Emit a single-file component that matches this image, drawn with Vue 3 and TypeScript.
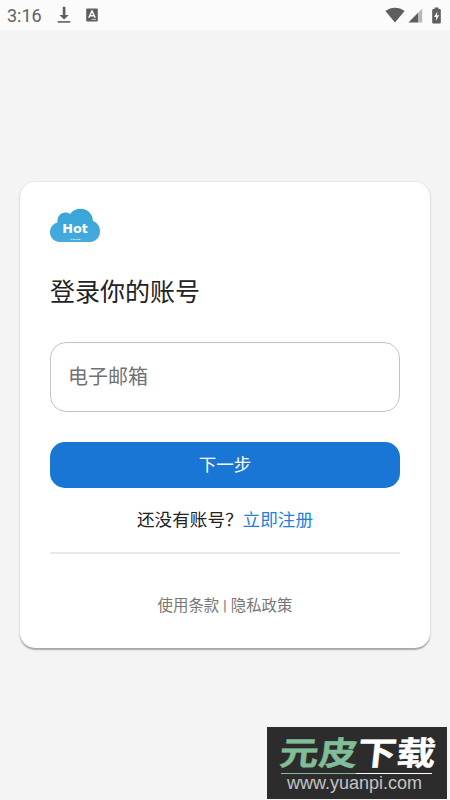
<script setup lang="ts">
import { ref } from 'vue'

const email = ref('')
const time = '3:16'
const legalLinks: string[] = ['使用条款', '隐私政策']
</script>

<template>
  <div class="screen">
    <header class="status">
      <span class="time">{{ time }}</span>
      <svg class="download" width="14" height="18" viewBox="0 0 14 18">
        <path d="M5.8.8h2.6v8.1h3.4L7.1 13.4 2.4 8.9h3.4z" />
        <path d="M.7 15.1h12.6v1.6H.7z" />
      </svg>
      <svg class="app" width="12" height="14" viewBox="0 0 12 14">
        <rect x=".2" y=".4" width="11.6" height="13" rx="1.2" />
        <path class="cut" d="M2.8 9.7 6 3l3.2 6.7M4.2 7.7h3.7" />
        <path class="cut thin" d="M5.5 11.4H10" />
      </svg>
      <span class="spacer"></span>
      <svg class="wifi" width="20" height="16" viewBox="0 0 20 16">
        <path d="M.4 4.1C5.9-.4 14.1-.4 19.6 4.1L10 15.6z" />
      </svg>
      <svg class="signal" width="15" height="15" viewBox="0 0 15 15">
        <path class="faint" d="M14.2.5v14H10V4.7z" />
        <path d="M10 4.7v9.8H.4z" />
      </svg>
      <svg class="battery" width="9" height="17" viewBox="0 0 9 17">
        <path d="M2.5.4h4v1.7h1.3q1 0 1 1v12.5q0 1-1 1H1.2q-1 0-1-1V3.1q0-1 1-1h1.3z" />
        <path class="bolt" d="M5.4 4.5 2 10h2.3L3.8 14l3.4-5.7H4.9z" />
      </svg>
    </header>

    <main class="stage">
      <form class="card" @submit.prevent>
        <svg class="logo" width="50" height="35" viewBox="0 0 50 35">
          <defs>
            <linearGradient id="cloud" x1="0" y1="0" x2="0" y2="1">
              <stop offset="0" stop-color="#38a5d8" />
              <stop offset="1" stop-color="#46aadd" />
            </linearGradient>
          </defs>
          <path
            fill="url(#cloud)"
            d="M9.5 34C4 33.5 0 29.4 0 24.4c0-5.2 3.2-9 7.4-10C7 8.8 10.6 4.6 15.4 4.6c1.8 0 3.4.5 4.7 1.5C22.2 2.7 26.2.7 30.6.7c7.1 0 12.3 5.4 12.4 12.4C47.3 14.7 50 18.6 50 23.2c0 6.2-4 10.3-9.8 10.8z"
          />
          <text x="25.1" y="25" text-anchor="middle" class="logo-name">Hot</text>
          <path class="logo-line" d="M20.5 31.4h10.5" />
        </svg>
        <h1>登录你的账号</h1>
        <input v-model="email" type="email" placeholder="电子邮箱" />
        <button type="submit">下一步</button>
        <p class="signup">还没有账号？<a>立即注册</a></p>
        <hr />
        <p class="legal"><a>{{ legalLinks[0] }}</a> | <a>{{ legalLinks[1] }}</a></p>
      </form>
    </main>

    <aside class="mark">
      <div class="mark-name"><span>元皮</span>下载</div>
      <div class="mark-rule"></div>
      <div class="mark-url">www.yuanpi.com</div>
    </aside>
  </div>
</template>

<style>
body {
  background: #f4f4f4;
}
</style>

<style scoped>
.screen {
  position: relative;
  box-sizing: border-box;
  width: 450px;
  height: 800px;
  overflow: hidden;
  background: #f4f4f4;
  font-family: Roboto, 'Noto Sans CJK SC', sans-serif;
}
.status {
  display: flex;
  align-items: center;
  box-sizing: border-box;
  height: 30px;
  padding: 0 9px 0 7px;
  background: #fbfbfb;
  color: #626262;
}
.status svg {
  fill: #5e5e5e;
}
.time {
  width: 50px;
  font-size: 18px;
  line-height: 30px;
  padding-top: 2px;
}
.app {
  margin-left: 15px;
}
.app .cut {
  fill: none;
  stroke: #fbfbfb;
  stroke-width: 1.5;
}
.app .thin {
  stroke-width: 0.7;
}
.spacer {
  flex: 1;
}
.signal {
  margin-left: 3px;
}
.status .faint {
  fill: #b9b9b9;
}
.battery {
  margin-left: 9px;
}
.status .bolt {
  fill: #fbfbfb;
}
.stage {
  padding: 152px 20px 0;
}
.card {
  box-sizing: border-box;
  height: 466px;
  padding: 26px 30px 0;
  border-radius: 15px;
  background: #fff;
  box-shadow: 0 1.5px 1.5px rgba(0, 0, 0, 0.3), 0 0 3px rgba(0, 0, 0, 0.07);
}
.logo {
  display: block;
}
.logo-name {
  fill: #fff;
  font: bold 12.8px 'DejaVu Sans', sans-serif;
}
.logo-line {
  stroke: #c5e5f4;
  stroke-width: 1;
  stroke-dasharray: 2 0.5;
}
h1 {
  margin: 32px 0 0;
  font-size: 25px;
  line-height: 36px;
  font-weight: 400;
  color: #222;
}
input {
  display: block;
  box-sizing: border-box;
  width: 350px;
  height: 70px;
  margin: 31px 0 30px;
  padding: 0 17px 1px;
  border: 1px solid #c4c4c4;
  border-radius: 16px;
  outline: none;
  background: #fff;
  font-family: inherit;
  font-size: 20px;
}
input::placeholder {
  color: #727272;
  opacity: 1;
}
button {
  display: block;
  width: 350px;
  height: 46px;
  padding: 0;
  border: 0;
  border-radius: 15px;
  background: #1976d5;
  color: #fff;
  font-family: inherit;
  font-size: 17.5px;
  line-height: 46px;
}
.signup {
  margin: 19px 0 0;
  text-align: center;
  font-size: 17.6px;
  line-height: 26px;
  color: #222;
}
.signup a {
  color: #2380da;
}
hr {
  height: 2px;
  margin: 19px 0 0;
  border: 0;
  background: #e8e8e8;
}
.legal {
  margin: 40px 0 0;
  text-align: center;
  font-size: 15.4px;
  line-height: 24px;
  color: #777;
}
.legal a {
  letter-spacing: 0.05px;
}
.mark {
  position: absolute;
  left: 267px;
  top: 727px;
  width: 180px;
  height: 72px;
  background: #2c2c2c;
}
.mark-name {
  height: 45px;
  padding-left: 13px;
  font-family: 'Noto Sans CJK SC', sans-serif;
  font-size: 39px;
  font-weight: 700;
  line-height: 45px;
  color: #fff;
  white-space: nowrap;
  -webkit-text-stroke: 0.5px;
  transform: translateY(2px) skewX(-6deg) scaleY(0.84);
}
.mark-name span {
  color: #80bd98;
}
.mark-rule {
  width: 151px;
  height: 1px;
  margin: 1px 0 0 14px;
  background: linear-gradient(90deg, #80bd98 50%, #fff 50%);
}
.mark-url {
  padding-left: 20px;
  font-family: 'Liberation Sans', sans-serif;
  font-size: 18px;
  line-height: 19px;
  color: #c4c4c4;
}
</style>
